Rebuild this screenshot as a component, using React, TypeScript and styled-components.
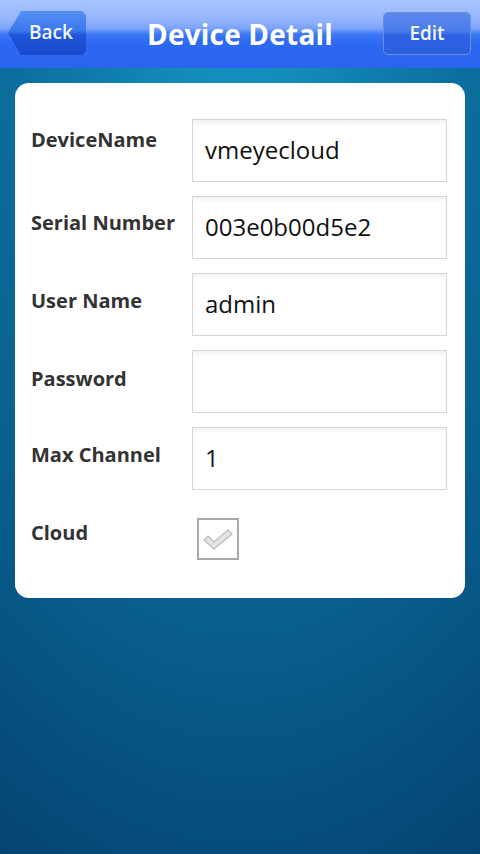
import React from "react";
import styled, { createGlobalStyle } from "styled-components";

const Global = createGlobalStyle`
  html, body { margin: 0; padding: 0; }
  body { font-family: "Open Sans", "Noto Sans", "DejaVu Sans", sans-serif; }
  * { box-sizing: border-box; }
`;

const Screen = styled.div`
  width: 480px;
  min-height: 854px;
  display: flex;
  flex-direction: column;
  background:
    radial-gradient(ellipse 115% 115% at 50% 0%, #1797c5 0%, #1183b1 20%, #0c6d9d 42%, #09608f 62%, #065080 82%, #04426d 100%);
`;

const Header = styled.header`
  height: 68px;
  display: flex;
  align-items: center;
  justify-content: space-between;
  padding: 0 9px 0 8px;
  position: relative;
  background: linear-gradient(
    to bottom,
    #a9c5fe 0%,
    #93b4fd 30%,
    #7aa2fa 42%,
    #3e79f5 50%,
    #2e69f2 62%,
    #2a64f0 100%
  );
`;

const Title = styled.h1`
  position: absolute;
  left: 0;
  right: 0;
  top: 0;
  bottom: 0;
  margin: 0;
  display: flex;
  align-items: center;
  justify-content: center;
  color: #fff;
  font-size: 28px;
  font-weight: 700;
  letter-spacing: 0.2px;
  padding-bottom: 1px;
  pointer-events: none;
`;

const BackButton = styled.button`
  position: relative;
  z-index: 1;
  width: 78px;
  height: 44px;
  margin-top: -2px;
  border: none;
  padding: 0 0 2px 8px;
  color: #f2f6ff;
  font-family: inherit;
  font-size: 19px;
  font-weight: 600;
  background: linear-gradient(to bottom, #5590f3 0%, #3a77ee 45%, #1f56dc 55%, #1848cc 100%);
  clip-path: polygon(0 50%, 13px 0, calc(100% - 4px) 0, 100% 4px, 100% calc(100% - 4px), calc(100% - 4px) 100%, 13px 100%);
`;

const EditButton = styled.button`
  position: relative;
  z-index: 1;
  width: 88px;
  height: 43px;
  margin-top: -1px;
  border: 1.5px solid #6b8fd8;
  border-radius: 5px;
  padding: 0 0 2px;
  color: #f2f6ff;
  font-family: inherit;
  font-size: 19px;
  font-weight: 600;
  background: linear-gradient(to bottom, #5a88ec 0%, #4a7be9 45%, #2d62e2 55%, #2a5fe0 100%);
`;

const Card = styled.section`
  margin: 15px 15px 0 15px;
  background: #fff;
  border-radius: 14px;
  padding: 36px 18px 38px 16px;
  display: flex;
  flex-direction: column;
  gap: 14px;
`;

const Row = styled.div<{ $gap?: number }>`
  display: grid;
  grid-template-columns: 161px 1fr;
  align-items: start;
  margin-top: ${(p) => p.$gap ?? 0}px;
`;

const Label = styled.div<{ $offset: number }>`
  padding-top: ${(p) => p.$offset}px;
  font-size: 20px;
  line-height: 24px;
  font-weight: 700;
  color: #333;
  white-space: nowrap;
`;

const Field = styled.div`
  height: 63px;
  border: 1px solid #d6d6d6;
  background: linear-gradient(to bottom, #f2f2f2 0px, #fff 6px, #fff 100%);
  display: flex;
  align-items: center;
  padding: 0 12px 2px;
  font-size: 24px;
  color: #111;
`;

const Check = styled.div`
  margin-left: 5px;
  width: 42px;
  height: 42px;
  border: 2px solid #a9a9a9;
  background: #fff;
  display: flex;
  align-items: center;
  justify-content: center;
`;

const rows = [
  { label: "DeviceName", value: "vmeyecloud", offset: 9 },
  { label: "Serial Number", value: "003e0b00d5e2", offset: 15 },
  { label: "User Name", value: "admin", offset: 16 },
  { label: "Password", value: "", offset: 17 },
  { label: "Max Channel", value: "1", offset: 16 },
];

export default function App() {
  return (
    <>
      <Global />
      <Screen>
        <Header>
          <BackButton>Back</BackButton>
          <Title>Device Detail</Title>
          <EditButton>Edit</EditButton>
        </Header>
        <Card>
          {rows.map((r) => (
            <Row key={r.label}>
              <Label $offset={r.offset}>{r.label}</Label>
              <Field>{r.value}</Field>
            </Row>
          ))}
          <Row $gap={14}>
            <Label $offset={3}>Cloud</Label>
            <Check>
              <svg width="34" height="24" viewBox="0 0 34 24">
                <path
                  d="M3 13 L7 9 L13 15 L27 3 L31 7 L13 22 Z"
                  fill="#e4e4e4"
                  stroke="#bdbdbd"
                  strokeWidth="1.3"
                  strokeLinejoin="round"
                />
              </svg>
            </Check>
          </Row>
        </Card>
      </Screen>
    </>
  );
}
